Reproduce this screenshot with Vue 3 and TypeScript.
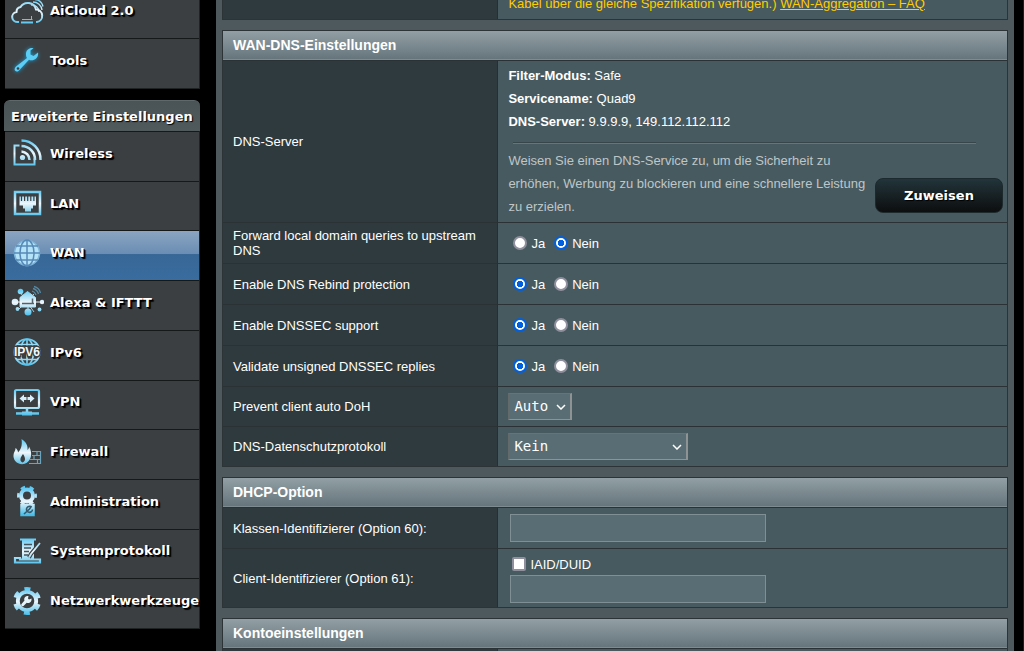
<script setup lang="ts">
import { ref } from 'vue'

type IconName =
  | 'cloud' | 'wrench' | 'wireless' | 'lan' | 'wan' | 'alexa'
  | 'ipv6' | 'vpn' | 'firewall' | 'admin' | 'log' | 'tools'

interface NavItem { label: string; icon: IconName; active?: boolean }
interface RadioRow { id: string; label: string; value: string }

const generalItems: NavItem[] = [
  { label: 'AiCloud 2.0', icon: 'cloud' },
  { label: 'Tools', icon: 'wrench' },
]

const advancedItems: NavItem[] = [
  { label: 'Wireless', icon: 'wireless' },
  { label: 'LAN', icon: 'lan' },
  { label: 'WAN', icon: 'wan', active: true },
  { label: 'Alexa & IFTTT', icon: 'alexa' },
  { label: 'IPv6', icon: 'ipv6' },
  { label: 'VPN', icon: 'vpn' },
  { label: 'Firewall', icon: 'firewall' },
  { label: 'Administration', icon: 'admin' },
  { label: 'Systemprotokoll', icon: 'log' },
  { label: 'Netzwerkwerkzeuge', icon: 'tools' },
]

const navGroups = [
  { title: '', items: generalItems },
  { title: 'Erweiterte Einstellungen', items: advancedItems },
]

const radioRows = ref<RadioRow[]>([
  { id: 'forward', label: 'Forward local domain queries to upstream DNS', value: 'Nein' },
  { id: 'rebind', label: 'Enable DNS Rebind protection', value: 'Ja' },
  { id: 'dnssec', label: 'Enable DNSSEC support', value: 'Ja' },
  { id: 'unsigned', label: 'Validate unsigned DNSSEC replies', value: 'Ja' },
])
const choices = ['Ja', 'Nein']

const doh = ref('Auto')
const privacy = ref('Kein')
const classId = ref('')
const clientId = ref('')
const iaid = ref(false)
</script>

<template>
  <div class="page">
    <svg class="defs" width="0" height="0" aria-hidden="true">
      <defs>
        <linearGradient id="ice" gradientUnits="userSpaceOnUse" x1="0" y1="4" x2="0" y2="31">
          <stop offset="0" stop-color="#5cc8f2" />
          <stop offset="0.5" stop-color="#eef6fb" />
          <stop offset="1" stop-color="#45bdea" />
        </linearGradient>
      </defs>
    </svg>

    <div class="shell">
      <nav class="sidebar">
        <section v-for="(group, g) in navGroups" :key="g" class="group">
          <h2 v-if="group.title" class="group-title">{{ group.title }}</h2>
          <div class="items" :class="{ long: group.items.length > 2 }">
            <a v-for="item in group.items" :key="item.label" href="#" class="item" :class="{ active: item.active }">
              <svg class="icon" viewBox="0 0 34 34" fill="none" stroke="url(#ice)" stroke-width="2" aria-hidden="true">
                <template v-if="item.icon === 'cloud'">
                  <path d="M9 28h-1a5 5 0 0 1-1.500-10 5 5 0 0 1 4-5 8.500 8.500 0 0 1 15.500 2.500 6.300 6.300 0 0 1 1 12.500h-1M11 28.500h12" />
                  <path d="M12 25.500h10.500M21.500 22v4" stroke="#9fb3bd" stroke-width="1" />
                  <path d="M21 11a7 7 0 0 1 8 7M23 8a9 9 0 0 1 9 8M25 5.500a9 9 0 0 1 8 7" stroke-width="1.300" />
                </template>
                <template v-else-if="item.icon === 'wrench'">
                  <g class="glow" stroke="none">
                    <path d="M28 8.500l-4.500 3.500-3-1.500 0-4 3-2.300c-4-1-8 2-7.500 6.500 0 1.500 .5 2.500 1 3.200L6 22.500c-3 3-.5 6.500 2.500 4.500L19 15.800c4.500 2 10-1.800 9-7.300z" fill="#5ccdf5" />
                    <circle cx="8" cy="24.500" r="1.300" fill="#3b3f41" />
                  </g>
                </template>
                <template v-else-if="item.icon === 'wireless'">
                  <path d="M9.500 9.500h-5v19h20v-6" />
                  <circle cx="12.500" cy="21.500" r="2.600" fill="url(#ice)" stroke="none" />
                  <path d="M11.500 4.500a19 19 0 0 1 19 19.500M11.500 10a13.500 13.500 0 0 1 13.500 14M11.500 15.500a8.500 8.500 0 0 1 8 8.500" stroke-width="2.500" />
                </template>
                <template v-else-if="item.icon === 'lan'">
                  <rect x="5" y="6" width="25" height="22" stroke-width="2.500" />
                  <path d="M9.500 10.500h16.500v9h-3v3h-2v3h-6v-3h-2v-3h-3.500z" fill="url(#ice)" stroke="none" />
                  <path d="M11.500 10v5M14.600 10v5M17.700 10v5M20.800 10v5M23.900 10v5" stroke="#3b3f41" stroke-width="1.200" />
                </template>
                <template v-else-if="item.icon === 'wan'">
                  <circle cx="17" cy="17" r="12.500" fill="#b4e3f8" stroke="#7fb5d8" stroke-width="1.500" />
                  <g stroke="#5689b7" stroke-width="1.500">
                    <path d="M17 4v26M6 10h22M4 17h26M6 24h22" />
                    <ellipse cx="17" cy="17" rx="7" ry="13" />
                  </g>
                </template>
                <template v-else-if="item.icon === 'alexa'">
                  <path d="M2 17h30M10 7l14 20M24 9L8 25M18 17v10" stroke-width="1" />
                  <path d="M17.500 6.500l8 6v9.500h-15.500v-9.500z" fill="url(#ice)" stroke="url(#ice)" stroke-width="1" stroke-linejoin="round" />
                  <g fill="url(#ice)" stroke="none">
                    <circle cx="5" cy="17" r="3.300" /><circle cx="32" cy="17" r="2.200" />
                    <circle cx="10.500" cy="6.500" r="2.800" /><circle cx="18" cy="27" r="3.500" />
                    <circle cx="7.500" cy="24" r="1.900" /><circle cx="29.500" cy="24.500" r="1.900" />
                  </g>
                  <path d="M12 18.500h12M22.500 18v-4.500" stroke="#52626b" stroke-width="1.500" />
                  <path d="M22 6a6 6 0 0 1 4 4M23 3.500a8 8 0 0 1 5.500 5.500M24 1.500a9 9 0 0 1 6.500 6.500" stroke="#5489a6" stroke-width="1.300" />
                </template>
                <template v-else-if="item.icon === 'ipv6'">
                  <circle cx="17" cy="17" r="12.800" stroke-width="1.800" />
                  <ellipse cx="17" cy="17" rx="6.500" ry="12.800" stroke-width="1.600" />
                  <path d="M17 4v26M6.500 9.500h21M6.500 24.500h21" stroke-width="1.600" />
                  <text x="17" y="21" text-anchor="middle" class="icon-text">IPV6</text>
                </template>
                <template v-else-if="item.icon === 'vpn'">
                  <rect x="5" y="5" width="24" height="18" rx="1.500" stroke-width="2.200" />
                  <path d="M17 23v5M6 28.500h23" stroke-width="2.500" />
                  <path d="M12 28.500h10" stroke-width="4" />
                  <path d="M14 9.500v2.500h2.500v3H14v2.500L9.500 13.500zM20 9.500v2.500h-2.500v3H20v2.500l4.500-4z" fill="#d7effa" stroke="none" />
                </template>
                <template v-else-if="item.icon === 'firewall'">
                  <path d="M14 29c-7 1-11-4-10.500-9 .3-3 2-4 2-7 1.500 1 2.500 2.500 2.500 4.500 3-3 4.500-7 3.500-13.500 5 3 6.500 7 6 11 1-.8 1.500-2 1.500-3.500 4 6.500 2.500 15.500-5 17.500zM12.500 27.500c3-1 3.500-4.500 .5-8.500-2.500 3-4 7-.5 8.500z" fill="url(#ice)" fill-rule="evenodd" stroke="none" />
                  <path d="M19 28.500h11.500v-12H22M22 20.500h8.500M20 24.500h10.500M27 16.500v4M24 20.500v4M27.500 24.500v4" stroke="#6aa3bd" stroke-width="1.200" />
                </template>
                <template v-else-if="item.icon === 'admin'">
                  <circle cx="17" cy="11.500" r="6" stroke-width="4" />
                  <circle cx="17" cy="11.500" r="8.700" stroke-width="2.500" stroke-dasharray="4.500 4.610" stroke-dashoffset="2.200" />
                  <path d="M11 20.500h13v11H11z" fill="url(#ice)" stroke="url(#ice)" stroke-width="1.500" />
                  <path d="M20.500 22.500a3 3 0 1 0 2 3M14 30l5.500-5 2-3" stroke="#35596b" stroke-width="1.600" />
                </template>
                <template v-else-if="item.icon === 'log'">
                  <path d="M12 5.500h12v20H12z" fill="url(#ice)" stroke="none" />
                  <path d="M10 5.500h16M5 24v4.500h25v-3H10V24z" stroke-width="2.200" />
                  <path d="M14 10.500h8M14 14h7M14 17.500h5M14 21h4" stroke="#45545c" stroke-width="1.300" />
                  <path d="M30 9l-9 11-2 3.500" stroke="#3b3f41" stroke-width="4" />
                  <path d="M30 9l-9 11-2 3.500" stroke-width="1.800" />
                </template>
                <template v-else>
                  <circle cx="17" cy="17" r="9.200" stroke-width="3.800" />
                  <circle cx="17" cy="17" r="12.200" stroke-width="3.600" stroke-dasharray="6 6.776" stroke-dashoffset="-3.400" />
                  <path d="M21.500 14.500l-2.500 1-1-1 .5-2.500c-3-.5-5 2-4 4.500l-3 3.500c-1 1.500 .8 3 2 2l3.200-3.200c3 1 5.300-1.500 4.800-4.300z" fill="#e6f4fb" stroke="none" />
                </template>
              </svg>
              <span>{{ item.label }}</span>
            </a>
          </div>
        </section>
      </nav>

      <main class="panel">
        <table class="form open">
          <colgroup><col class="c-label"><col></colgroup>
          <tbody>
            <tr class="cut">
              <th></th>
              <td class="notice">Kabel über die gleiche Spezifikation verfügen.) <a href="#">WAN-Aggregation – FAQ</a></td>
            </tr>
          </tbody>
        </table>

        <table class="form">
          <colgroup><col class="c-label"><col></colgroup>
          <thead><tr><th colspan="2">WAN-DNS-Einstellungen</th></tr></thead>
          <tbody>
            <tr>
              <th>DNS-Server</th>
              <td class="dns">
                <div><strong>Filter-Modus:</strong> Safe</div>
                <div><strong>Servicename:</strong> Quad9</div>
                <div><strong>DNS-Server:</strong> 9.9.9.9, 149.112.112.112</div>
                <hr>
                <div class="assign">
                  <p>Weisen Sie einen DNS-Service zu, um die Sicherheit zu erhöhen, Werbung zu blockieren und eine schnellere Leistung zu erzielen.</p>
                  <button type="button">Zuweisen</button>
                </div>
              </td>
            </tr>
            <tr v-for="row in radioRows" :key="row.id" class="radio-row">
              <th :id="row.id">{{ row.label }}</th>
              <td>
                <div class="radios" role="radiogroup" :aria-labelledby="row.id">
                  <label v-for="c in choices" :key="c">
                    <input v-model="row.value" type="radio" :name="row.id" :value="c">{{ c }}
                  </label>
                </div>
              </td>
            </tr>
            <tr class="select-row">
              <th><label for="doh">Prevent client auto DoH</label></th>
              <td>
                <div class="select small">
                  <select id="doh" v-model="doh"><option>Auto</option><option>Ja</option><option>Nein</option></select>
                  <svg viewBox="0 0 10 6" aria-hidden="true"><path d="M1 1l4 4 4-4" /></svg>
                </div>
              </td>
            </tr>
            <tr class="select-row">
              <th><label for="privacy">DNS-Datenschutzprotokoll</label></th>
              <td>
                <div class="select">
                  <select id="privacy" v-model="privacy"><option>Kein</option><option>DNS-over-TLS (DoT)</option></select>
                  <svg viewBox="0 0 10 6" aria-hidden="true"><path d="M1 1l4 4 4-4" /></svg>
                </div>
              </td>
            </tr>
          </tbody>
        </table>

        <table class="form">
          <colgroup><col class="c-label"><col></colgroup>
          <thead><tr><th colspan="2">DHCP-Option</th></tr></thead>
          <tbody>
            <tr class="radio-row">
              <th><label for="classid">Klassen-Identifizierer (Option 60):</label></th>
              <td><input id="classid" v-model="classId" type="text" class="text"></td>
            </tr>
            <tr class="client-row">
              <th><label for="clientid">Client-Identifizierer (Option 61):</label></th>
              <td>
                <label class="check"><input v-model="iaid" type="checkbox">IAID/DUID</label>
                <input id="clientid" v-model="clientId" type="text" class="text">
              </td>
            </tr>
          </tbody>
        </table>

        <table class="form">
          <colgroup><col class="c-label"><col></colgroup>
          <thead><tr><th colspan="2">Kontoeinstellungen</th></tr></thead>
          <tbody><tr class="radio-row"><th></th><td></td></tr></tbody>
        </table>
      </main>
    </div>
  </div>
</template>

<style>
body {
  margin: 0;
  background: #000;
}
</style>

<style scoped>
* {
  box-sizing: border-box;
}
.page {
  height: 100vh;
  overflow: hidden;
  background: #000;
  color: #fff;
  font-family: "Liberation Sans", Arial, sans-serif;
  font-size: 13px;
  line-height: 15px;
}
.defs {
  position: absolute;
}
.shell {
  display: flex;
  gap: 16px;
  margin-top: -12px;
  padding-right: 9px;
  border-right: 1px solid #1c1e1f;
}

/* Navigation */
.sidebar {
  flex: 0 0 200px;
  min-width: 0;
  padding-left: 4px;
  font-family: "DejaVu Sans", Verdana, sans-serif;
  font-weight: bold;
}
.group {
  margin-bottom: 11px;
}
.group-title {
  margin: 0;
  height: 31px;
  padding-left: 7px;
  border-radius: 6px 6px 0 0;
  border-top: 1px solid #5f696c;
  background: linear-gradient(#4a5356, #50595c);
  font-size: 13px;
  line-height: 31px;
  white-space: nowrap;
  text-shadow: 1px 1px 1px #000;
}
.items {
  display: grid;
  grid-auto-rows: 1fr;
  min-height: 101px;
  margin-left: 1px;
  border-right: 1px solid #202324;
  border-bottom: 1px solid #202324;
  background: #3b3f41;
}
.items.long {
  min-height: 498px;
}
.item {
  display: flex;
  align-items: center;
  gap: 6px;
  padding: 0 0 6px 5px;
  border-top: 1px solid #15191a;
  color: #fff;
  text-decoration: none;
  white-space: nowrap;
  text-shadow: 1px 1px 0 #000, 2px 2px 1px #000;
}
.item.active {
  background: linear-gradient(#8ba5c2 0, #6a8db3 47%, #376796 48%, #3a6c9f 100%);
}
.icon {
  flex: none;
  width: 34px;
  height: 34px;
}
.glow {
  filter: drop-shadow(0 0 2px #1a9fd8);
}
.icon-text {
  font: bold 12px "Liberation Sans", Arial, sans-serif;
  fill: #f2f8fb;
  stroke: #3b3f41;
  stroke-width: 3px;
  paint-order: stroke;
  text-shadow: none;
}

/* Settings panel */
.panel {
  flex: 1;
  min-width: 0;
  display: flex;
  flex-direction: column;
  gap: 10px;
  padding: 0 6px;
  background: #4d595d;
}
.form {
  width: 100%;
  table-layout: fixed;
  border-spacing: 0;
  border: 1px solid #2c3437;
}
.form.open {
  border-top: 0;
}
.c-label {
  width: 35%;
}
thead th {
  height: 29px;
  padding: 0 10px;
  border-bottom: 1px solid #7e8b90;
  background: linear-gradient(#92a0a5, #66757c);
  font-size: 14px;
  font-weight: bold;
  text-align: left;
}
tbody th,
tbody td {
  padding: 0 4px 0 10px;
  border-top: 1px solid #2a3235;
  text-align: left;
  font-weight: normal;
}
tbody th {
  background: #2f3a3e;
}
tbody td {
  border-left: 1px solid #263033;
  background: #475a5f;
}
.cut th,
.cut td {
  height: 31px;
  border-top: 0;
}
.notice,
.notice a {
  color: #fc0;
}
.dns {
  height: 162px;
  padding-top: 2px;
  padding-bottom: 4px;
  line-height: 23px;
}
.dns hr {
  margin: 9px 27px 5px 5px;
  border: 0;
  border-top: 1px solid #37464a;
  border-bottom: 1px solid #66757a;
}
.assign {
  display: flex;
  justify-content: space-between;
  align-items: flex-end;
}
.assign p {
  flex: 0 1 364px;
  margin: 0;
  color: #bfc6c8;
}
.assign button {
  flex: none;
  width: 128px;
  height: 35px;
  margin-bottom: 5px;
  border: 1px solid #1c292d;
  border-radius: 8px;
  background: linear-gradient(#22343a, #0d0e0f);
  color: #fff;
  font: bold 13px "DejaVu Sans", Verdana, sans-serif;
  text-shadow: 1px 1px 1px #000;
}
.radio-row th,
.radio-row td {
  height: 41px;
}
.select-row th,
.select-row td {
  height: 40px;
}
.client-row th,
.client-row td {
  height: 59px;
}
.radios {
  display: flex;
  gap: 9px;
  padding-left: 5px;
}
.radios label,
.check {
  display: flex;
  align-items: center;
  gap: 4px;
}
.radios input {
  appearance: none;
  width: 14px;
  height: 14px;
  margin: 0;
  border: 2px solid #8f8f9d;
  border-radius: 50%;
  background: #fff;
}
.radios input:checked {
  border-color: #0060df;
  background: radial-gradient(circle, #0060df 0 3px, #fff 3px);
}
.select {
  position: relative;
  width: 180px;
}
.select.small {
  width: 64px;
}
.select select {
  appearance: none;
  display: block;
  width: 100%;
  height: 27px;
  padding: 0 0 2px 4px;
  border: 2px solid;
  border-width: 1px 2px;
  border-color: #6a7274 #8f9394 #8f9394 #646a6c;
  border-radius: 0;
  background: #596d74;
  color: #fff;
  font: 14px "DejaVu Sans Mono", monospace;
}
.select svg {
  position: absolute;
  right: 6px;
  top: 11px;
  width: 10px;
  height: 6px;
  fill: none;
  stroke: #fff;
  stroke-width: 1.5;
  pointer-events: none;
}
.text {
  display: block;
  width: 256px;
  height: 28px;
  margin: 0 0 0 2px;
  padding: 0 4px;
  border: 1px solid #7f8f94;
  background: #596d74;
  color: #fff;
  font: 13px "Liberation Sans", Arial, sans-serif;
}
.check {
  height: 22px;
  padding-left: 4px;
}
.check input {
  appearance: none;
  width: 14px;
  height: 14px;
  margin: 0;
  border: 2px solid #8f8f9d;
  border-radius: 2px;
  background: #fff;
}
.check input:checked {
  border-color: #0060df;
  background: #0060df;
}
</style>
